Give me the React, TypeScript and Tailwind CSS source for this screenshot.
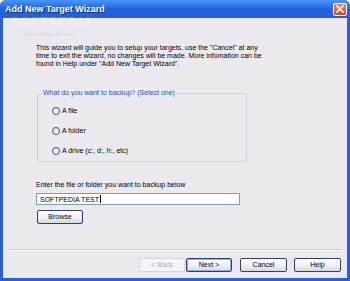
import React from "react";

function Radio({ label }: { label: string }) {
  return (
    <div className="flex h-[8px] items-center">
      <span className="box-border h-[8px] w-[8px] rounded-full border border-[#2c5a8e] bg-gradient-to-br from-[#d9dde6] to-white" />
      <span className="ml-[2px] leading-[8px]">{label}</span>
    </div>
  );
}

function Btn({ label, w, focus, disabled }: { label: string; w: string; focus?: boolean; disabled?: boolean }) {
  if (disabled) {
    return (
      <div className={`${w} box-border flex h-[14px] items-center justify-center rounded-[2px] border border-[#d6d4de] bg-[#f5f4f7] text-[#b0aeb6]`}>
        {label}
      </div>
    );
  }
  return (
    <div
      className={`${w} box-border flex h-[14px] items-center justify-center rounded-[2px] border border-[#2a3f7a] bg-gradient-to-b from-white via-[#f1f1f4] to-[#d7d8e2] text-black ${
        focus ? "shadow-[inset_0_0_0_1px_#8fb0ee]" : ""
      }`}
    >
      {label}
    </div>
  );
}

export default function App() {
  return (
    <div
      className="relative h-[281px] w-[350px] overflow-hidden bg-[#ffffff] text-[7px] text-black"
      style={{ fontFamily: '"Liberation Sans", Arial, sans-serif' }}
    >
      <div className="flex h-[281px] w-[350px] flex-col overflow-hidden rounded-t-[6px] bg-[#2a5fd9]">
        {/* title bar */}
        <div className="flex h-[18px] shrink-0 items-center justify-between bg-gradient-to-b from-[#4a95f7] via-[#1e63e0] to-[#2a5ed4] pl-[5px] pr-[3px]">
          <span className="text-[9px] font-bold leading-none text-white [text-shadow:1px_1px_0_#0b2d86]">
            Add New Target Wizard
          </span>
          <div className="box-border flex h-[13px] w-[14px] items-center justify-center rounded-[2px] border border-white bg-gradient-to-b from-[#e98463] to-[#d24a22]">
            <svg width="8" height="8" viewBox="0 0 8 8">
              <path d="M1 1 L7 7 M7 1 L1 7" stroke="white" strokeWidth="1.6" strokeLinecap="square" />
            </svg>
          </div>
        </div>
        {/* body */}
        <div className="mx-[3px] flex h-[260px] flex-col bg-[#ebe9ee] px-[5px]">
          <div className="flex flex-col pl-[28px]">
            <p className="mt-[26px] leading-[8px]">
              This wizard will guide you to setup your targets, use the "Cancel" at any
              <br />
              time to exit the wizard, no changes will be made. More infomation can be
              <br />
              found in Help under "Add New Target Wizard".
            </p>
            <div className="relative ml-[1px] mt-[25px] box-border h-[69px] w-[210px] rounded-[3px] border border-[#d2d0d8]">
              <span className="absolute left-[4px] top-[-5px] bg-[#ebe9ee] px-[1px] leading-[8px] text-[#2350c8]">
                What do you want to backup? (Select one)
              </span>
              <div className="flex flex-col gap-[12px] pl-[14px] pt-[13px]">
                <Radio label="A file" />
                <Radio label="A folder" />
                <Radio label="A drive (c:, d:, h:, etc)" />
              </div>
            </div>
            <div className="mt-[19px] h-[8px] leading-[8px]">Enter the file or folder you want to backup below</div>
            <div className="mt-[4px] box-border flex h-[12px] w-[204px] items-center border border-[#7f9db9] bg-white pl-[3px]">
              <span className="leading-none">SOFTPEDIA TEST</span>
              <span className="ml-[1px] h-[8px] w-[1px] bg-black" />
            </div>
            <div className="ml-[1px] mt-[5px]">
              <Btn label="Browse" w="w-[46px]" />
            </div>
          </div>
          <div className="mt-[25px] h-0 border-t border-b border-t-[#c9c7cf] border-b-white" />
          <div className="mt-[7px] flex justify-end pr-[1px]">
            <Btn label="< Back" w="w-[46px]" disabled />
            <div className="ml-[1px]">
              <Btn label="Next >" w="w-[46px]" focus />
            </div>
            <div className="ml-[8px]">
              <Btn label="Cancel" w="w-[47px]" />
            </div>
            <div className="ml-[7px]">
              <Btn label="Help" w="w-[47px]" />
            </div>
          </div>
        </div>
      </div>
      {/* watermark */}
      <div className="pointer-events-none absolute left-[10px] top-[12px] text-[13px] font-bold tracking-[1px] text-white/25">
        SOFTPEDIA
      </div>
      <div className="pointer-events-none absolute left-[24px] top-[30px] text-[6px] text-[#d8d6dc]">www.softpedia.com</div>
    </div>
  );
}
